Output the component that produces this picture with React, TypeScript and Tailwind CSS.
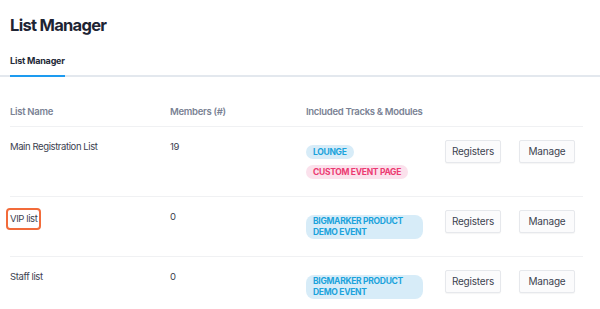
import React from 'react'

type Badge = { label: string; tone: 'blue' | 'pink' }
type Row = { name: string; members: string; badges: Badge[]; highlight?: boolean }

const rows: Row[] = [
  { name: 'Main Registration List', members: '19', badges: [{ label: 'LOUNGE', tone: 'blue' }, { label: 'CUSTOM EVENT PAGE', tone: 'pink' }] },
  { name: 'VIP list', members: '0', badges: [{ label: 'BIGMARKER PRODUCT DEMO EVENT', tone: 'blue' }], highlight: true },
  { name: 'Staff list', members: '0', badges: [{ label: 'BIGMARKER PRODUCT DEMO EVENT', tone: 'blue' }] },
]

function Pill({ badge }: { badge: Badge }) {
  const tone = badge.tone === 'blue' ? 'bg-[#d7ecf8] text-[#1ba3dc]' : 'bg-[#fbe1ec] text-[#ec3a72]'
  const wide = badge.label.length > 20
  return (
    <span className={`inline-block self-start font-bold text-[8.5px] leading-[11px] tracking-[-0.3px] ${tone} ${wide ? 'w-[117px] px-[7px] py-[1px] rounded-[8px]' : 'px-[7px] py-[1.5px] rounded-full'}`}>
      {badge.label}
    </span>
  )
}

function Btn({ children }: { children: React.ReactNode }) {
  return (
    <button className="w-[56px] h-[23px] border border-[#e6e8ec] bg-[#fbfbfc] rounded-[2px] text-[10px] tracking-[-0.2px] text-[#3d4350] shadow-[0_1px_1px_rgba(0,0,0,0.04)]">
      {children}
    </button>
  )
}

export default function App() {
  return (
    <div className="w-[600px] h-[309px] bg-white overflow-hidden" style={{ fontFamily: 'Inter, "Noto Sans", sans-serif' }}>
      <div className="pl-[10px] pt-[14px]">
        <h1 className="text-[16.5px] leading-[22px] font-bold text-[#1e2433] tracking-[-0.7px]">List Manager</h1>
      </div>

      <div className="mt-[10px] pl-[10px] border-b-2 border-[#e3e8ee]">
        <div className="inline-block text-[9px] leading-[12px] font-bold tracking-[-0.2px] text-[#232a38] pb-[8px] border-b-2 border-[#1d9bf0] -mb-[2px]">List Manager</div>
      </div>

      <div className="ml-[10px] w-[573px] mt-[29px]">
        <div className="flex text-[9.5px] leading-[12px] font-semibold tracking-[-0.3px] text-[#7a8294] pb-[8px] border-b border-[#f0f1f3]">
          <div className="w-[160px]">List Name</div>
          <div className="w-[136px]">Members (#)</div>
          <div>Included Tracks &amp; Modules</div>
        </div>

        {rows.map((r, i) => (
          <div key={i} className={`flex pt-[13px] pb-[17px] text-[9.5px] tracking-[-0.4px] text-[#3b4150] ${i < rows.length - 1 ? 'border-b border-[#f0f1f3]' : ''}`}>
            <div className="w-[160px] leading-[14px]">
              {r.highlight ? (
                <span className="inline-block -ml-[4px] -mt-[2px] px-[2px] py-[2px] border-2 border-[#f26b3a] rounded-[4px] leading-[14px]">{r.name}</span>
              ) : (
                r.name
              )}
            </div>
            <div className="w-[136px] leading-[14px]">{r.members}</div>
            <div className="w-[139px] flex flex-col gap-[6px] pt-[5px]">
              {r.badges.map((b, j) => <Pill key={j} badge={b} />)}
            </div>
            <div className="flex gap-[18px]">
              <Btn>Registers</Btn>
              <Btn>Manage</Btn>
            </div>
          </div>
        ))}
      </div>
    </div>
  )
}
